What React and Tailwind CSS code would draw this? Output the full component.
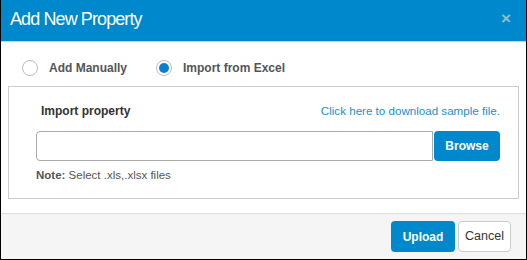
export default function App() {
  return (
    <div className="w-[527px] h-[260px] bg-white font-['Liberation_Sans',Arial,sans-serif] flex flex-col border-x border-b border-black relative overflow-hidden">
      <div className="h-[42px] bg-[#0088cc] flex items-center justify-between pl-[10px] pr-[16px] pb-[4px] -mx-px border-b border-[#d0d0d0] shrink-0">
        <div className="text-white text-[18px] tracking-[-0.9px] leading-none">Add New Property</div>
        <div className="text-[#a9b7c0] text-[17px] font-bold leading-none">×</div>
      </div>
      <div className="flex items-center h-[44px] pt-[7px] pl-[21px]">
        <div className="flex items-center">
          <span className="w-[16px] h-[16px] rounded-full border border-[#bbb] bg-white"></span>
          <span className="ml-[11px] text-[12px] font-bold text-[#555]">Add Manually</span>
        </div>
        <div className="flex items-center ml-[29px]">
          <span className="w-[16px] h-[16px] rounded-full border border-[#bbb] bg-white flex items-center justify-center">
            <span className="w-[10px] h-[10px] rounded-full bg-[#0a7fd0]"></span>
          </span>
          <span className="ml-[11px] text-[12px] font-bold text-[#555]">Import from Excel</span>
        </div>
      </div>
      <div className="mx-[7px] border border-[#ccc] h-[113px] pl-[27px] pr-[18px] pt-[16px]">
        <div className="flex items-center justify-between h-[16px]">
          <span className="ml-[5px] text-[12px] font-bold text-[#333]">Import property</span>
          <span className="text-[11.6px] text-[#1a8fd0]">Click here to download sample file.</span>
        </div>
        <div className="flex mt-[12px] h-[30px]">
          <div className="flex-1 border border-[#aaa] rounded-l-[4px] bg-white"></div>
          <button className="w-[66px] ml-[1px] bg-[#0088cc] text-white text-[12px] font-bold rounded-[4px]">Browse</button>
        </div>
        <div className="mt-[6px] text-[11.5px] text-[#555]"><span className="font-bold">Note:</span> Select .xls,.xlsx files</div>
      </div>
      <div className="mt-[14px] flex-1 bg-[#f5f5f5] border-t border-[#ddd] flex items-center justify-end pr-[15px] gap-[3px]">
        <button className="h-[31px] w-[64px] bg-[#0088cc] text-white text-[12px] font-bold rounded-[4px]">Upload</button>
        <button className="h-[31px] w-[53px] bg-white border border-[#ccc] text-[#333] text-[12.5px] rounded-[4px]">Cancel</button>
      </div>
    </div>
  );
}
